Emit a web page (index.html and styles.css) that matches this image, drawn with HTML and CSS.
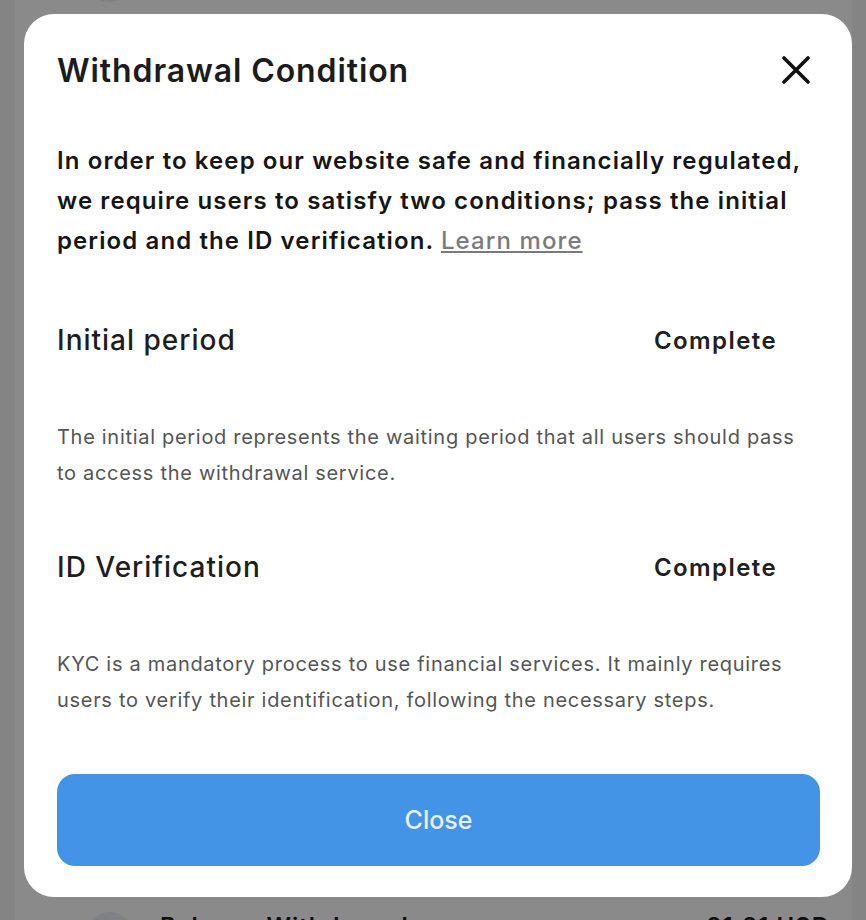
FILE: index.html
```html
<!DOCTYPE html>
<html lang="en">
<head>
  <meta charset="UTF-8">
  <meta name="viewport" content="width=device-width, initial-scale=1.0">
  <title>Withdrawal Condition</title>
  <link rel="stylesheet" href="styles.css">
</head>
<body>
  <div class="page">
    <div class="page-card">
      <div class="history-row history-row--top">
        <span class="avatar"></span>
        <span class="history-name">Deposit</span>
        <span class="history-amount">10.00 USD</span>
      </div>
      <div class="history-row">
        <span class="avatar"></span>
        <span class="history-name">Balance Withdrawal</span>
        <span class="history-amount">21.21 USD</span>
      </div>
    </div>
  </div>

  <div class="overlay">
    <div class="modal" role="dialog" aria-labelledby="modalTitle">
      <div class="modal-header">
        <h2 id="modalTitle">Withdrawal Condition</h2>
        <button class="icon-close" type="button" aria-label="Close">
          <svg width="28" height="28" viewBox="0 0 28 28" fill="none">
            <path d="M2 2L26 26M26 2L2 26" stroke="#111" stroke-width="3.6" stroke-linecap="round"/>
          </svg>
        </button>
      </div>

      <p class="intro">
        In order to keep our website safe and financially regulated, we require users to satisfy two conditions; pass the initial period and the ID verification.
        <a href="#" class="learn-more">Learn more</a>
      </p>

      <div class="condition">
        <div class="condition-head">
          <h3>Initial period</h3>
          <span class="status">Complete</span>
        </div>
        <p class="condition-desc">The initial period represents the waiting period that all users should pass to access the withdrawal service.</p>
      </div>

      <div class="condition">
        <div class="condition-head">
          <h3>ID Verification</h3>
          <span class="status">Complete</span>
        </div>
        <p class="condition-desc">KYC is a mandatory process to use financial services. It mainly requires users to verify their identification, following the necessary steps.</p>
      </div>

      <button class="btn-primary" type="button">Close</button>
    </div>
  </div>
</body>
</html>
```

FILE: styles.css
```css
/* base */
body {
  margin: 0;
  font-family: Inter, "Noto Sans", sans-serif;
  background: #f4f4f4;
  color: #1b1b1b;
}

/* page under the dialog */
.page {
  height: 100vh;
  padding: 0 14px 0 15px;
  box-sizing: border-box;
  overflow: hidden;
}

.page-card {
  height: 100%;
  background: #fff;
  display: flex;
  flex-direction: column;
  justify-content: space-between;
}

.history-row {
  display: flex;
  align-items: flex-start;
  gap: 27px;
  padding: 0 22px 0 71px;
  height: 48px;
  margin-bottom: -40px;
}

.history-row--top {
  margin-top: -45px;
  margin-bottom: 0;
}

.avatar {
  width: 47px;
  height: 47px;
  border-radius: 50%;
  background: #e9eef8;
  flex-shrink: 0;
}

.history-name,
.history-amount {
  font-size: 24px;
  line-height: 24px;
  font-weight: 600;
  letter-spacing: 1px;
  padding-top: 3px;
}

.history-name {
  flex: 1;
}

/* dialog */
.overlay {
  position: fixed;
  inset: 0;
  background: rgba(0, 0, 0, 0.46);
  display: flex;
  padding: 14px 14px 23px 24px;
}

.modal {
  flex: 1;
  background: #fff;
  border-radius: 30px;
  padding: 32px 32px 31px 33px;
  display: flex;
  flex-direction: column;
}

.modal-header {
  display: flex;
  align-items: center;
  justify-content: space-between;
  height: 48px;
}

.modal-header h2 {
  margin: 0;
  font-size: 32px;
  font-weight: 600;
  letter-spacing: 0.9px;
  color: #1c1c1c;
}

.icon-close {
  border: none;
  background: none;
  padding: 0;
  margin-right: 10px;
  width: 28px;
  height: 28px;
  cursor: pointer;
}

.icon-close svg {
  display: block;
}

.intro {
  margin: 47px 0 0;
  font-size: 24px;
  line-height: 40px;
  font-weight: 600;
  letter-spacing: 1.1px;
  color: #161616;
}

.learn-more {
  color: #7b7b7b;
  font-weight: 500;
}

.condition {
  margin-top: 59px;
}

.condition-head {
  display: flex;
  align-items: center;
  justify-content: space-between;
  height: 40px;
  padding-right: 43px;
}

.condition-head h3 {
  margin: 0;
  font-size: 28px;
  font-weight: 500;
  letter-spacing: 1px;
  color: #1e1e1e;
}

.status {
  font-size: 24px;
  font-weight: 600;
  letter-spacing: 1.4px;
  color: #202020;
}

.condition-desc {
  margin: 59px 0 0;
  font-size: 20px;
  line-height: 36px;
  font-weight: 400;
  letter-spacing: 0.7px;
  color: #555;
}

.condition + .condition {
  margin-top: 56px;
}

.btn-primary {
  margin-top: 56px;
  height: 92px;
  border: none;
  border-radius: 18px;
  background: #4393e6;
  color: #e8f1fc;
  font-family: inherit;
  font-size: 25px;
  font-weight: 500;
  cursor: pointer;
}
```
